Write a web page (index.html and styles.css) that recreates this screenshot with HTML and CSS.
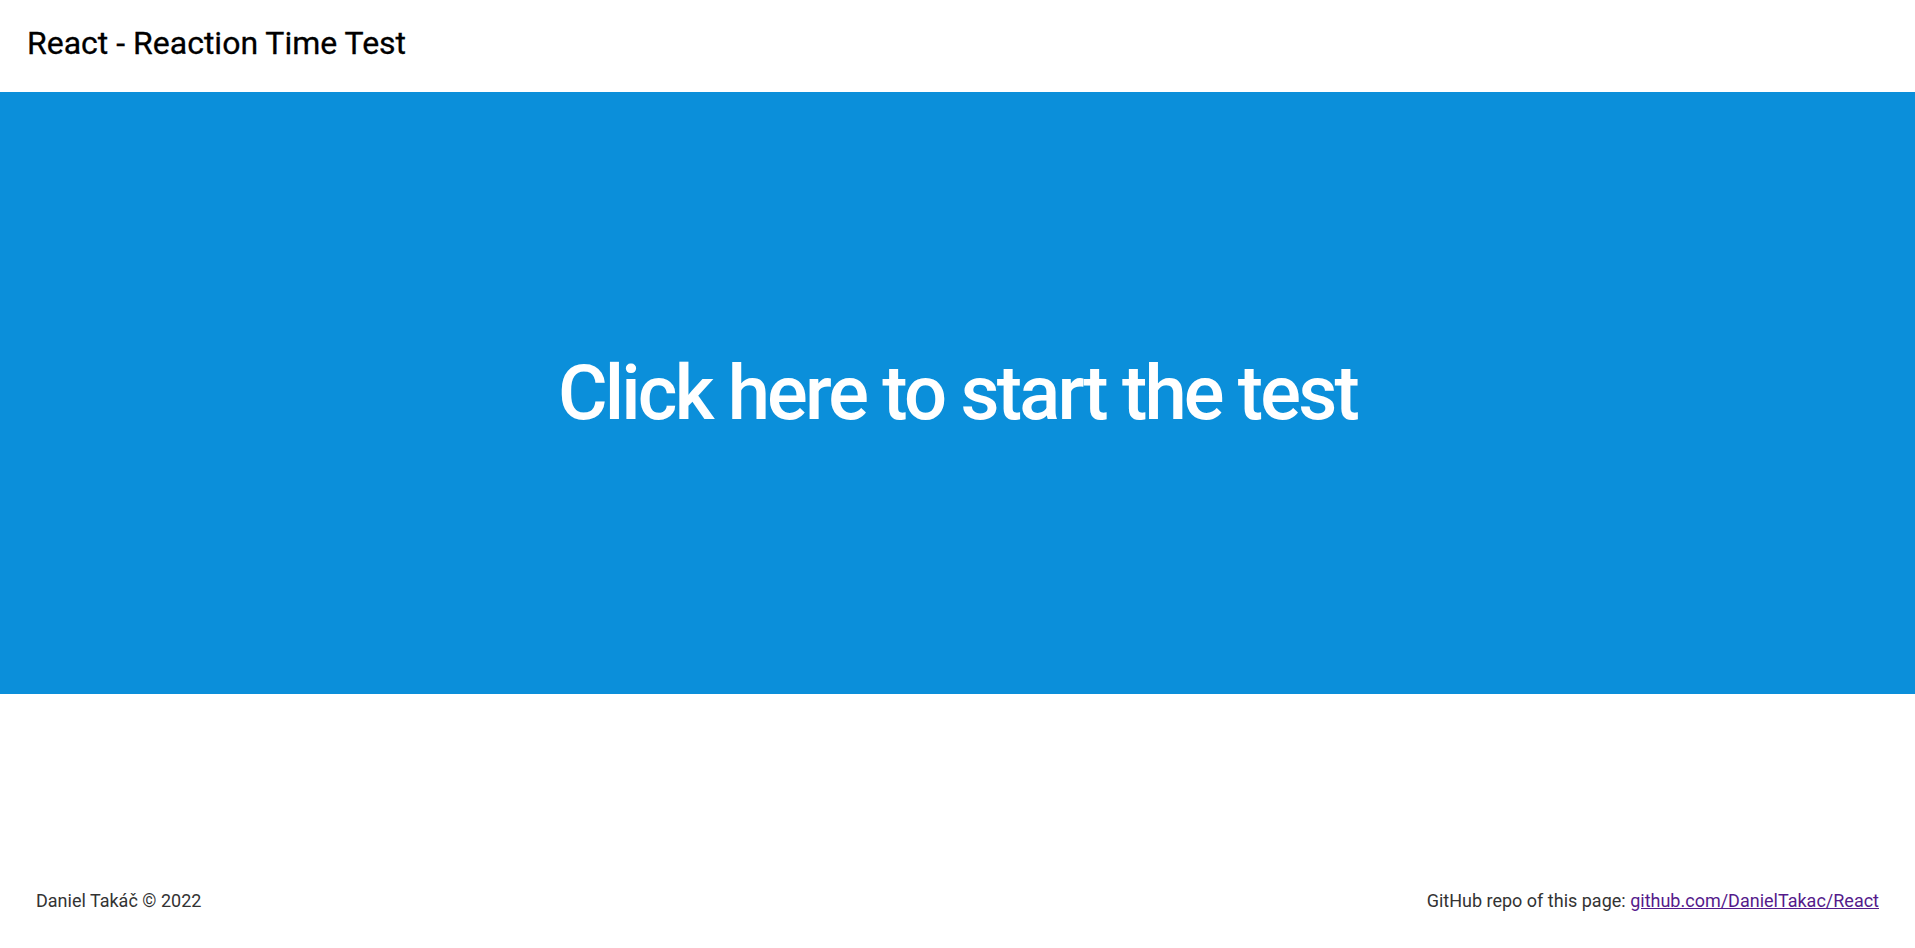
FILE: index.html
```html
<!DOCTYPE html>
<html lang="en">
<head>
<meta charset="utf-8">
<title>React - Reaction Time Test</title>
<link rel="stylesheet" href="styles.css">
</head>
<body>
<div class="page">
  <header class="header">
    <h1 class="title">React - Reaction Time Test</h1>
  </header>
  <main class="stage">
    <div class="stage-text">Click here to start the test</div>
  </main>
  <div class="spacer"></div>
  <footer class="footer">
    <span class="copy">Daniel Takáč © 2022</span>
    <span class="repo">GitHub repo of this page: <a class="repo-link" href="#">github.com/DanielTakac/React</a></span>
  </footer>
</div>
</body>
</html>
```
FILE: styles.css
```css
html, body {
  margin: 0;
  padding: 0;
  height: 100%;
}
body {
  font-family: Roboto, "Liberation Sans", sans-serif;
  background: #ffffff;
}
.page {
  display: flex;
  flex-direction: column;
  height: 948px;
}
.header {
  height: 92px;
  display: flex;
  align-items: center;
  padding: 0 27px 6px;
  box-sizing: border-box;
}
.title {
  margin: 0;
  font-size: 32px;
  font-weight: 400;
  color: #000;
  -webkit-text-stroke: 0.3px #000;
}
.stage {
  height: 602px;
  background: #0b8fda;
  display: flex;
  align-items: center;
  justify-content: center;
  cursor: pointer;
}
.stage-text {
  color: #ffffff;
  font-size: 76px;
  font-weight: 500;
  letter-spacing: -2.8px;
}
.spacer {
  flex: 1;
}
.footer {
  display: flex;
  justify-content: space-between;
  align-items: center;
  padding: 0 36px;
  height: 96px;
  font-size: 18px;
  color: #333333;
}
.repo-link {
  color: #551a8b;
}
```
